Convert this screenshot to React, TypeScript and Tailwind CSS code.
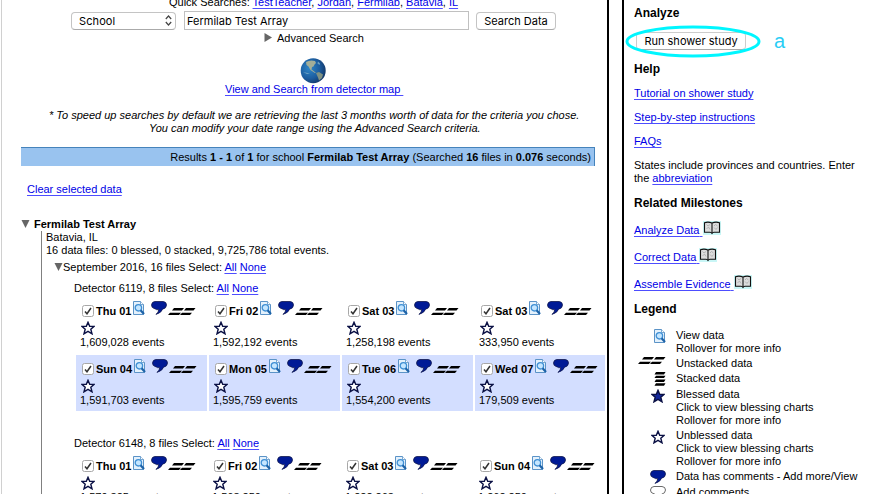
import React from "react";

type Kids = { children?: React.ReactNode; className?: string };

const Link = ({ children, className = "" }: Kids) => (
  <a
    href="#"
    className={`text-[#0000e6] underline decoration-[#4d4dff] decoration-1 underline-offset-2 [text-decoration-skip-ink:none] ${className}`}
  >
    {children}
  </a>
);

const ViewIcon = () => (
  <svg width="12" height="14" viewBox="0 0 12 14" className="block shrink-0">
    <path d="M.5.5H7.5L10.5 3.5V13.5H.5Z" fill="#e4f1fc" stroke="#5b93c7" />
    <path d="M7.5 .5V3.5h3" fill="#fff" stroke="#5b93c7" strokeWidth=".8" />
    <circle cx="5.4" cy="6.8" r="3.2" fill="#c5e6ff" stroke="#3f8fd4" strokeWidth="1.3" />
    <path d="M7.6 9.2 11 13" stroke="#1d63a8" strokeWidth="2.2" />
  </svg>
);

const Bubble = ({ filled = true }: { filled?: boolean }) => (
  <svg width="16" height="14" viewBox="0 0 16 14" className="block shrink-0">
    <path
      d="M4 .5H12Q15.5.8 15.5 4 15.4 7.4 11.6 8.2 10.6 11.6 5 13.4 8 11 7.6 8.6H5.4Q4.4 7.8 3 7.4.5 6.8.5 4 .8.7 4 .5Z"
      fill={filled ? "#001a96" : "#fff"}
      stroke={filled ? "#10184e" : "#444"}
      strokeWidth=".8"
    />
  </svg>
);

const Unstacked = () => (
  <svg width="28" height="8" viewBox="0 0 28 8" className="block shrink-0">
    <path
      d="M6 0H16L14 2.4H4ZM18 0H27.5L25.5 2.4H16ZM2 4.7H13L11 7.1H0ZM14 4.7H24L22 7.1H12Z"
      fill="#000"
    />
  </svg>
);

const Stacked = () => (
  <svg width="12" height="14" viewBox="0 0 12 14" className="block">
    <path
      d="M2 0H11.5L10 2.4H.5ZM2 3.7H11.5L10 6.1H.5ZM2 7.5H11.5L10 9.9H.5ZM2 11.3H11.5L10 13.7H.5Z"
      fill="#000"
    />
  </svg>
);

const Star = ({ filled = false }: { filled?: boolean }) => (
  <svg width="14" height="14" viewBox="0 0 14 14" className="block">
    <path
      d="M7 1.3 8.7 5.2 13.1 5.4 9.8 8.3 11 12.8 7 10.4 3 12.8 4.2 8.3 .9 5.4 5.3 5.2Z"
      fill={filled ? "#14289a" : "#fff"}
      stroke="#0a1044"
      strokeWidth="1.4"
    />
  </svg>
);

const Book = () => (
  <svg width="18" height="14" viewBox="0 0 18 14" className="block bg-[#c9f6f6]">
    <path
      d="M1.5 1.8Q5 .4 9 2 13 .4 16.5 1.8V11.3H11Q9.5 11.4 9 12.3 8.5 11.4 7 11.3H1.5Z"
      fill="#dcdcdc"
      stroke="#111"
      strokeWidth="1.1"
    />
    <path d="M9 2V12.5" stroke="#111" strokeWidth="1.1" />
    <path
      d="M3.5 3.5 5 5 7 3.5M3.5 8 5.5 6 7 8.5M11 5 12.5 3.5 14.5 5M11 6.5 13 8.5 14.5 6.5"
      stroke="#a8a8a8"
      strokeWidth=".8"
      fill="none"
    />
  </svg>
);

const Check = () => (
  <span className="flex h-[12px] w-[12px] shrink-0 items-center justify-center rounded-[2.5px] border border-[#a8a8a8] bg-white">
    <svg width="8" height="8" viewBox="0 0 8 8">
      <path d="M1 4.4 3 6.8 7 1" fill="none" stroke="#333" strokeWidth="1.5" />
    </svg>
  </span>
);

const Globe = () => (
  <svg width="26" height="26" viewBox="0 0 26 26" className="block">
    <defs>
      <radialGradient id="sea" cx="35%" cy="40%" r="70%">
        <stop offset="0" stopColor="#2f86c8" />
        <stop offset=".6" stopColor="#1c5c9e" />
        <stop offset="1" stopColor="#123463" />
      </radialGradient>
    </defs>
    <circle cx="13.2" cy="12.7" r="12.5" fill="url(#sea)" />
    <path
      d="M6 4Q10 1.5 15 3L16 5 14.5 6.5 13.5 8.5 12 9 11.5 11.5 13.5 13 16 15 14.5 14.8 10.5 12 8.5 8.5 6.5 7Z"
      fill="#a3ae98"
    />
    <path d="M16 15 19 14 23 16.5 22 20 19 22.5 18 19.5Z" fill="#7f9183" />
    <path d="M18 3.5 20 5.5 19.5 7 17.5 5.5ZM3 14 7 16 10 15.5M5 19 10 20" fill="#6fa3c4" />
  </svg>
);

type Day = [day: string, width: string, events: string];

const rowA: Day[] = [
  ["Thu 01", "w-[37px]", "1,609,028"],
  ["Fri 02", "w-[31px]", "1,592,192"],
  ["Sat 03", "w-[34px]", "1,258,198"],
  ["Sat 03", "w-[34px]", "333,950"],
];
const rowB: Day[] = [
  ["Sun 04", "w-[38px]", "1,591,703"],
  ["Mon 05", "w-[40px]", "1,595,759"],
  ["Tue 06", "w-[36px]", "1,554,200"],
  ["Wed 07", "w-[40px]", "179,509"],
];
const rowC: Day[] = [
  ["Thu 01", "w-[37px]", "1,579,325"],
  ["Fri 02", "w-[31px]", "1,568,250"],
  ["Sat 03", "w-[34px]", "1,222,263"],
  ["Sun 04", "w-[38px]", "1,262,250"],
];

const DayRow = ({ days, cols, tint = "" }: { days: Day[]; cols: string; tint?: string }) => (
  <div className={`ml-[34px] mt-[2px] grid h-[56px] gap-x-[2px] ${cols}`}>
    {days.map(([day, width, events], i) => (
      <div key={i} className={`pl-[4px] ${tint}`}>
        <div className="flex h-[23px] items-start pl-[2px] pt-[4px]">
          <span className="pt-[4px]">
            <Check />
          </span>
          <b className={`ml-[2px] shrink-0 pt-[4px] ${width}`}>{day}</b>
          <ViewIcon />
          <span className="ml-[6px]">
            <Bubble />
          </span>
          <span className="pl-[1px] pt-[7px]">
            <Unstacked />
          </span>
        </div>
        <div className="pl-[1px] pt-[1px]">
          <Star />
        </div>
        <div className="mt-[1px]">{events} events</div>
      </div>
    ))}
  </div>
);

const Detector = ({ id, className = "" }: { id: string; className?: string }) => (
  <div className={`ml-[32px] h-[13px] tracking-[0.01px] ${className}`}>
    Detector {id}, 8 files Select: <Link>All</Link> <Link>None</Link>
  </div>
);

const Heading = ({ children, className = "" }: Kids) => (
  <h3 className={`h-[14px] text-[12px] font-bold leading-[14px] ${className}`}>{children}</h3>
);

const Milestone = ({ children }: Kids) => (
  <div className="flex h-[27px] items-start">
    <Link className="mt-[3px] whitespace-pre">{children} </Link>
    <Book />
  </div>
);

type LegendRow = { icon: React.ReactNode; lines: string[]; box: string };

const legend: LegendRow[] = [
  { icon: <ViewIcon />, lines: ["View data", "Rollover for more info"], box: "h-[28px] pt-[1px]" },
  { icon: <Unstacked />, lines: ["Unstacked data"], box: "h-[15px] pt-[1px]" },
  { icon: <Stacked />, lines: ["Stacked data"], box: "h-[16px] pt-[1px]" },
  {
    icon: <Star filled />,
    lines: ["Blessed data", "Click to view blessing charts", "Rollover for more info"],
    box: "h-[41px] pt-[2px] pr-[1px]",
  },
  {
    icon: <Star />,
    lines: ["Unblessed data", "Click to view blessing charts", "Rollover for more info"],
    box: "h-[41px] pt-[2px] pr-[1px]",
  },
  { icon: <Bubble />, lines: ["Data has comments - Add more/View"], box: "h-[16px] pt-[1px]" },
  { icon: <Bubble filled={false} />, lines: ["Add comments"], box: "h-[16px] pt-[1px]" },
];

const SearchPanel = () => (
  <main className="ml-[1px] h-[494px] w-[608px] shrink-0 overflow-hidden border-l border-r-2 border-l-[#d0d0d0] border-r-black">
    <div className="-mt-[4px] ml-[167px] h-[13px]">
      Quick Searches: <Link>TestTeacher</Link>, <Link>Jordan</Link>, <Link>Fermilab</Link>, <Link>Batavia</Link>,{" "}
      <Link>IL</Link>
    </div>
    <div className="ml-[69px] mt-[2px] flex h-[19px] items-center font-['Inter',sans-serif] text-[11px]">
      <div className="flex h-[18px] w-[105px] items-center justify-between rounded-[4px] border border-[#c4c4c4] border-b-[#aaa] bg-white pl-[7px] pr-[3px]">
        <span className="pt-[1px] tracking-[0.1px]">School</span>
        <svg width="7" height="11" viewBox="0 0 7 11">
          <path d="M.8 4 3.5 1 6.2 4M.8 7 3.5 10 6.2 7" fill="none" stroke="#444" strokeWidth="1.2" />
        </svg>
      </div>
      <div className="ml-[8px] flex h-[19px] w-[285px] items-center border border-[#c0c0c0] pl-[2px] pt-[1px]">
        Fermilab Test Array
      </div>
      <div className="ml-[7px] flex h-[18px] w-[80px] items-center justify-center rounded-[4px] border border-[#c4c4c4] border-b-[#aaa] pt-[1px]">
        Search Data
      </div>
    </div>
    <div className="ml-[262px] mt-[2px] flex h-[13px]">
      <svg width="8" height="9" viewBox="0 0 8 9" className="mr-[5px] mt-[1px]">
        <path d="M.5 0 8 4.5.5 9Z" fill="#666" />
      </svg>
      Advanced Search
    </div>
    <div className="ml-[298px] mt-[13px] h-[25px]">
      <Globe />
    </div>
    <div className="ml-[223px] h-[13px] whitespace-pre">
      <Link>View and Search from detector map </Link>
    </div>
    <p className="ml-[47px] mt-[13px] h-[13px] italic">
      * To speed up searches by default we are retrieving the last 3 months worth of data for the criteria you chose.
    </p>
    <p className="ml-[147px] h-[13px] italic">You can modify your date range using the Advanced Search criteria.</p>
    <div className="ml-[19px] mt-[12px] h-[19px] w-[574px] border-r border-t border-[#4583bb] bg-[#99c3ef] pr-[3px] pt-[3px] text-right">
      Results <b>1 - 1</b> of <b>1</b> for school <b>Fermilab Test Array</b> (Searched <b>16</b> files in <b>0.076</b>{" "}
      seconds)
    </div>
    <div className="ml-[25px] mt-[17px] h-[13px]">
      <Link>Clear selected data</Link>
    </div>
    <div className="ml-[19px] mt-[22px] flex h-[13px]">
      <svg width="9" height="8" viewBox="0 0 9 8" className="mr-[4px] mt-[2px]">
        <path d="M.5 0H8.5L4.5 8Z" fill="#666" />
      </svg>
      <b>Fermilab Test Array</b>
    </div>
    <section className="ml-[39px] h-[300px] border-l border-[#808080]">
      <div className="ml-[4px] h-[13px]">Batavia, IL</div>
      <div className="ml-[4px] h-[13px]">16 data files: 0 blessed, 0 stacked, 9,725,786 total events.</div>
      <div className="ml-[12px] mt-[4px] flex h-[13px]">
        <svg width="9" height="8" viewBox="0 0 9 8" className="mt-[2px]">
          <path d="M.5 0H8.5L4.5 8Z" fill="#666" />
        </svg>
        <span>
          September 2016, 16 files Select: <Link>All</Link> <Link>None</Link>
        </span>
      </div>
      <Detector id="6119" className="mt-[8px]" />
      <DayRow days={rowA} cols="grid-cols-[131px_131px_131px_130px]" />
      <DayRow days={rowB} cols="grid-cols-[131px_131px_131px_130px]" tint="bg-[#d3deff]" />
      <Detector id="6148" className="mt-[26px]" />
      <DayRow days={rowC} cols="grid-cols-[130px_131px_131px_131px]" />
    </section>
  </main>
);

const Sidebar = () => (
  <aside className="ml-[13px] h-[494px] w-[268px] shrink-0 overflow-hidden border-l-2 border-black pl-[10px]">
    <Heading className="mt-[6px]">Analyze</Heading>
    <div className="relative ml-[2px] mt-[12px] h-[18px] w-[110px]">
      <div className="flex h-[18px] items-center justify-center rounded-[4px] border border-[#ccc] border-b-[#aaa] font-['Inter',sans-serif] text-[11px]">
        Run shower study
      </div>
      <svg width="136" height="34" viewBox="0 0 136 34" className="absolute left-[-11px] top-[-8px]">
        <ellipse cx="68" cy="17.5" rx="66" ry="14.5" fill="none" stroke="#00f6ff" strokeWidth="3" />
      </svg>
      <span className="absolute left-[138px] top-[-2px] text-[20px] leading-[23px] text-[#29cdf5]">a</span>
    </div>
    <Heading className="mt-[12px]">Help</Heading>
    <div className="mt-[11px] h-[24px]">
      <Link>Tutorial on shower study</Link>
    </div>
    <div className="h-[24px]">
      <Link>Step-by-step instructions</Link>
    </div>
    <div className="h-[24px]">
      <Link>FAQs</Link>
    </div>
    <p className="h-[26px]">
      States include provinces and countries. Enter
      <br />
      the <Link>abbreviation</Link>
    </p>
    <Heading className="mb-[11px] mt-[11px]">Related Milestones</Heading>
    <Milestone>Analyze Data</Milestone>
    <Milestone>Correct Data</Milestone>
    <Milestone>Assemble Evidence</Milestone>
    <Heading>Legend</Heading>
    <div className="mt-[12px]">
      {legend.map(({ icon, lines, box }, i) => (
        <div key={i} className="flex">
          <div className={`flex w-[32px] shrink-0 items-start justify-end ${box}`}>{icon}</div>
          <div className="ml-[10px] h-[13px] pt-[1px]">
            {lines.map((line) => (
              <div key={line}>{line}</div>
            ))}
          </div>
        </div>
      ))}
    </div>
  </aside>
);

export default function App() {
  return (
    <div className="flex h-[494px] w-[890px] overflow-hidden whitespace-nowrap bg-white font-['Liberation_Sans',Arial,sans-serif] text-[11px] leading-[13px] text-black">
      <SearchPanel />
      <Sidebar />
    </div>
  );
}
